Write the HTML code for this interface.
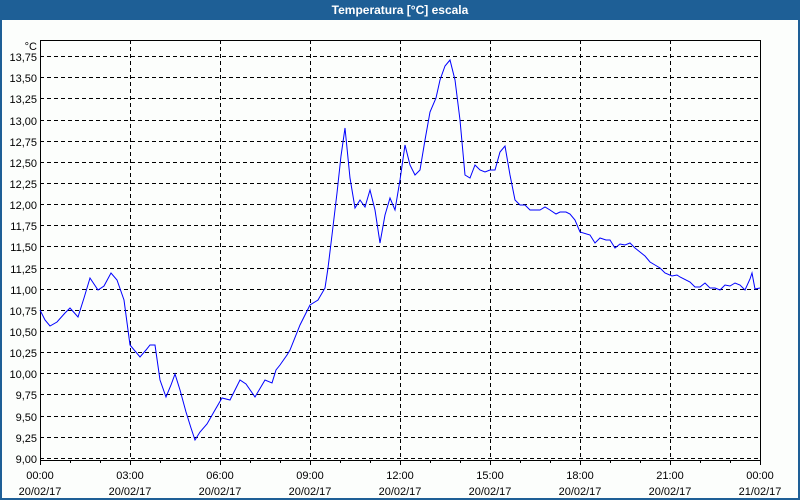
<!DOCTYPE html>
<html><head><style>
body{margin:0;width:800px;height:500px;overflow:hidden;background:#fcfefc;font-family:"Liberation Sans",sans-serif}
.title{position:absolute;left:0;top:0;width:800px;height:20px;background:#1e5f96;color:#fff;font-weight:bold;font-size:12px;text-align:center;line-height:21px}
.bl{position:absolute;left:0;top:20px;width:2px;height:480px;background:#1e5f96}
.br{position:absolute;left:798px;top:20px;width:2px;height:480px;background:#1e5f96}
.bb{position:absolute;left:0;top:498px;width:800px;height:2px;background:#1e5f96}
</style></head><body>
<div class="title">Temperatura [°C] escala</div>
<div class="bl"></div><div class="br"></div><div class="bb"></div>
<svg width="800" height="500" style="position:absolute;left:0;top:0" font-family="Liberation Sans, sans-serif" font-size="11">
<g stroke="#000" stroke-dasharray="4,3" stroke-width="1">
<line x1="40" x2="760" y1="56.5" y2="56.5"/><line x1="40" x2="760" y1="77.5" y2="77.5"/><line x1="40" x2="760" y1="98.5" y2="98.5"/><line x1="40" x2="760" y1="120.5" y2="120.5"/><line x1="40" x2="760" y1="141.5" y2="141.5"/><line x1="40" x2="760" y1="162.5" y2="162.5"/><line x1="40" x2="760" y1="183.5" y2="183.5"/><line x1="40" x2="760" y1="204.5" y2="204.5"/><line x1="40" x2="760" y1="225.5" y2="225.5"/><line x1="40" x2="760" y1="246.5" y2="246.5"/><line x1="40" x2="760" y1="268.5" y2="268.5"/><line x1="40" x2="760" y1="289.5" y2="289.5"/><line x1="40" x2="760" y1="310.5" y2="310.5"/><line x1="40" x2="760" y1="331.5" y2="331.5"/><line x1="40" x2="760" y1="352.5" y2="352.5"/><line x1="40" x2="760" y1="373.5" y2="373.5"/><line x1="40" x2="760" y1="394.5" y2="394.5"/><line x1="40" x2="760" y1="416.5" y2="416.5"/><line x1="40" x2="760" y1="437.5" y2="437.5"/><line x1="40" x2="760" y1="458.5" y2="458.5"/>
<line y1="40" y2="460" x1="130.5" x2="130.5"/><line y1="40" y2="460" x1="220.5" x2="220.5"/><line y1="40" y2="460" x1="310.5" x2="310.5"/><line y1="40" y2="460" x1="400.5" x2="400.5"/><line y1="40" y2="460" x1="490.5" x2="490.5"/><line y1="40" y2="460" x1="580.5" x2="580.5"/><line y1="40" y2="460" x1="670.5" x2="670.5"/>
</g>
<rect x="40.5" y="40.5" width="720" height="420" fill="none" stroke="#000"/>
<g stroke="#000"><line x1="40.5" x2="40.5" y1="460" y2="465"/><line x1="70.5" x2="70.5" y1="460" y2="463"/><line x1="100.5" x2="100.5" y1="460" y2="463"/><line x1="130.5" x2="130.5" y1="460" y2="465"/><line x1="160.5" x2="160.5" y1="460" y2="463"/><line x1="190.5" x2="190.5" y1="460" y2="463"/><line x1="220.5" x2="220.5" y1="460" y2="465"/><line x1="250.5" x2="250.5" y1="460" y2="463"/><line x1="280.5" x2="280.5" y1="460" y2="463"/><line x1="310.5" x2="310.5" y1="460" y2="465"/><line x1="340.5" x2="340.5" y1="460" y2="463"/><line x1="370.5" x2="370.5" y1="460" y2="463"/><line x1="400.5" x2="400.5" y1="460" y2="465"/><line x1="430.5" x2="430.5" y1="460" y2="463"/><line x1="460.5" x2="460.5" y1="460" y2="463"/><line x1="490.5" x2="490.5" y1="460" y2="465"/><line x1="520.5" x2="520.5" y1="460" y2="463"/><line x1="550.5" x2="550.5" y1="460" y2="463"/><line x1="580.5" x2="580.5" y1="460" y2="465"/><line x1="610.5" x2="610.5" y1="460" y2="463"/><line x1="640.5" x2="640.5" y1="460" y2="463"/><line x1="670.5" x2="670.5" y1="460" y2="465"/><line x1="700.5" x2="700.5" y1="460" y2="463"/><line x1="730.5" x2="730.5" y1="460" y2="463"/><line x1="760.5" x2="760.5" y1="460" y2="465"/></g>
<polyline fill="none" stroke="#0000ff" stroke-width="1" points="40,310 45,320 50,326 57,322 65,313 70,308 78,317 84,298 90,278 98,290 104,286 111,273 117,280 124,300 130,345 140,357 146,350 150,345 155,345 160,380 166,397 171,385 175,374 180,390 186,412 191,428 195,440 200,432 207,424 215,410 222,398 230,400 240,380 246,384 255,397 265,380 272,383 276,370 280,365 287,355 290,350 300,325 310,305 318,300 325,288 328,268 332,235 337,193 341,156 345,128 350,178 355,208 360,200 365,207 370,190 375,210 380,243 385,215 390,198 395,210 400,180 405,145 410,165 415,175 420,170 425,140 430,112 436,98 440,80 445,66 450,60 455,80 460,120 465,175 470,178 475,165 480,170 485,172 490,170 495,170 500,152 505,146 510,175 515,200 520,205 525,205 530,210 540,210 545,207 550,210 556,214 560,212 566,212 570,214 575,220 580,232 590,235 595,243 600,238 606,240 610,240 615,248 620,244 625,245 630,243 635,248 640,252 645,256 650,262 655,265 660,268 665,273 672,276 677,275 680,277 690,282 695,287 700,287 705,283 710,288 715,288 720,290 725,285 730,286 735,283 740,285 745,290 750,279 752,273 755,289 760,288"/>
<g text-anchor="end" fill="#000">
<text x="37" y="50">°C</text>
<text x="37" y="61">13,75</text><text x="37" y="82">13,50</text><text x="37" y="103">13,25</text><text x="37" y="125">13,00</text><text x="37" y="146">12,75</text><text x="37" y="167">12,50</text><text x="37" y="188">12,25</text><text x="37" y="209">12,00</text><text x="37" y="230">11,75</text><text x="37" y="251">11,50</text><text x="37" y="273">11,25</text><text x="37" y="294">11,00</text><text x="37" y="315">10,75</text><text x="37" y="336">10,50</text><text x="37" y="357">10,25</text><text x="37" y="378">10,00</text><text x="37" y="399">9,75</text><text x="37" y="421">9,50</text><text x="37" y="442">9,25</text><text x="37" y="463">9,00</text>
</g>
<g text-anchor="middle" fill="#000">
<text x="40" y="479">00:00</text><text x="40" y="495">20/02/17</text>
<text x="130" y="479">03:00</text><text x="130" y="495">20/02/17</text>
<text x="220" y="479">06:00</text><text x="220" y="495">20/02/17</text>
<text x="310" y="479">09:00</text><text x="310" y="495">20/02/17</text>
<text x="400" y="479">12:00</text><text x="400" y="495">20/02/17</text>
<text x="490" y="479">15:00</text><text x="490" y="495">20/02/17</text>
<text x="580" y="479">18:00</text><text x="580" y="495">20/02/17</text>
<text x="670" y="479">21:00</text><text x="670" y="495">20/02/17</text>
<text x="760" y="479">00:00</text><text x="760" y="495">21/02/17</text>
</g>
</svg>
</body></html>
